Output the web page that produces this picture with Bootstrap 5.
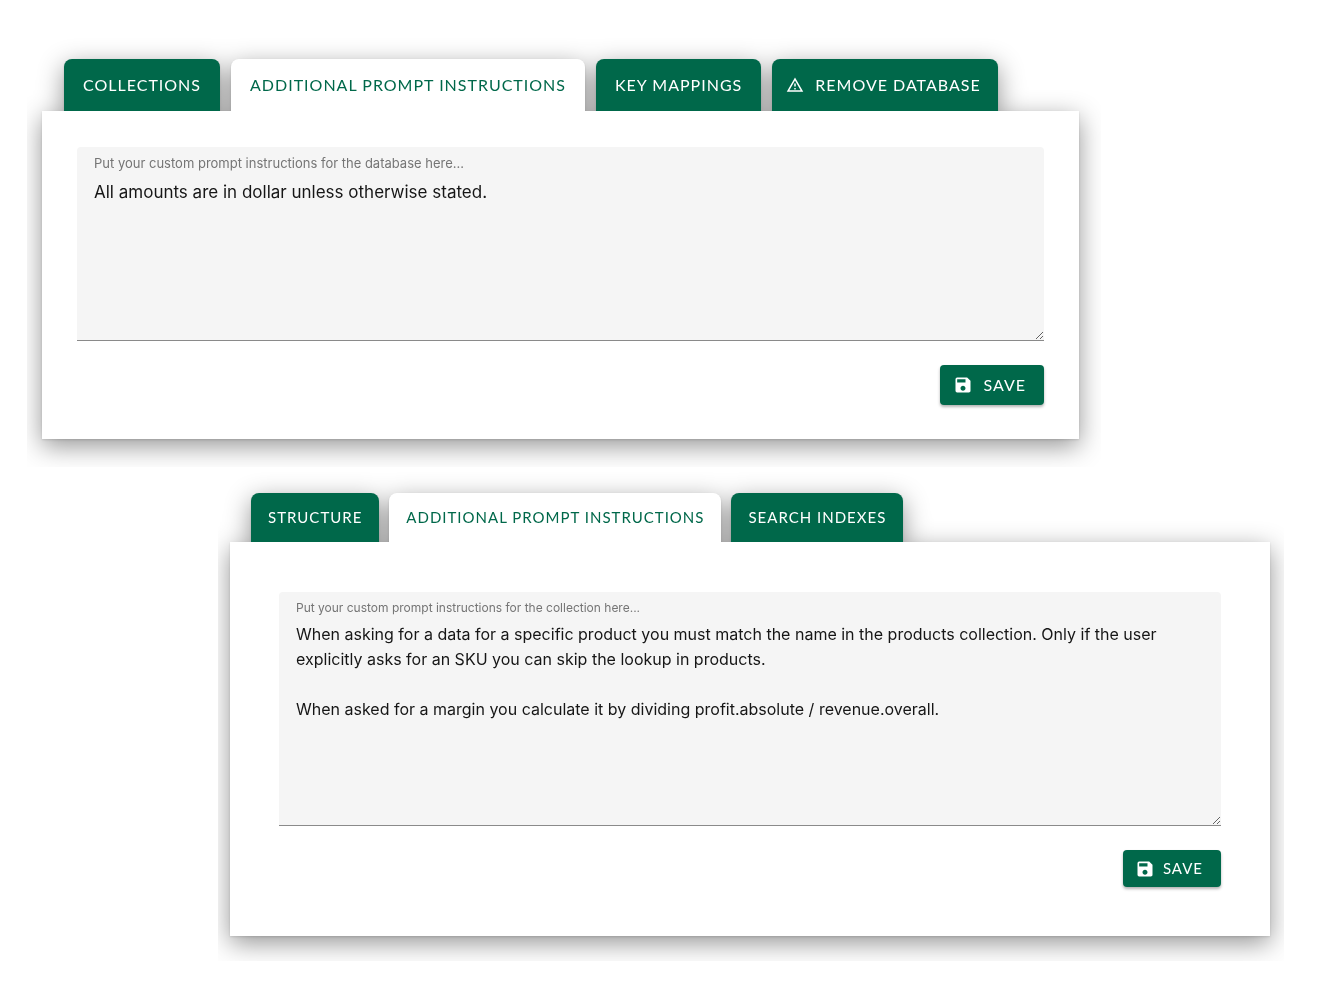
<!DOCTYPE html>
<html lang="en">
<head>
<meta charset="utf-8">
<meta name="viewport" content="width=device-width, initial-scale=1">
<title>Prompt instructions</title>
<link href="https://cdn.jsdelivr.net/npm/bootstrap@5.3.0/dist/css/bootstrap.min.css" rel="stylesheet">
<style>
  :root { --brand: #00684a; }
  body { font-family: Inter, "Liberation Sans", sans-serif; background: #fff; color: #161616; }

  /* Each stage clips the shadow of the sheet inside it */
  .stage-db { margin: 30px 219px 0 27px; padding: 29px 22px 28px 15px; }
  .stage-coll { margin: 0 36px 0 218px; padding: 26px 14px 25px 12px; }
  .sheet { filter: drop-shadow(0 1px 1px rgba(0,0,0,.12)) drop-shadow(0 7px 13px rgba(0,0,0,.42)); }

  .nav-tabs.sheet-tabs { border: 0; gap: 11px; padding-left: 22px; }
  .stage-coll .sheet-tabs { gap: 10px; padding-left: 21px; }
  .sheet-tabs .nav-link {
    border: 0; margin: 0; border-radius: 8px 8px 0 0; padding: 14px 19px;
    font: 16px/24px Lato, sans-serif; letter-spacing: 1px; text-transform: uppercase;
    background: var(--brand); color: #fff;
  }
  .stage-coll .sheet-tabs .nav-link { padding: 12px 17px 13px; font-size: 15px; }
  .sheet-tabs .nav-link.active, .stage-coll .sheet-tabs .nav-link.active { background: #fff; color: var(--brand); }
  .sheet-tabs .nav-link.with-icon { padding-left: 14px; padding-right: 17px; gap: 11px; }

  .sheet-body { background: #fff; padding: 36px 35px 34px; }
  .stage-coll .sheet-body { padding: 50px 49px 49px; }

  .field { background: #f5f5f5; border-radius: 4px 4px 0 0; border-bottom: 1px solid #8a8a8a; padding: 8px 0 0 17px; }
  .field label { font-size: 13px; line-height: 16px; color: #757575; margin-bottom: 8px; }
  .field textarea { border: 0; outline: 0; background: transparent; color: #161616; font-size: 17px; line-height: 26px; padding: 0 16px 5px 0; resize: vertical; }
  .stage-coll .field label { font-size: 12px; margin-bottom: 6px; }
  .stage-coll .field textarea { font-size: 16px; line-height: 25px; padding-bottom: 3px; }

  .btn-save {
    --bs-btn-color: #fff; --bs-btn-bg: var(--brand); --bs-btn-hover-color: #fff; --bs-btn-hover-bg: #00553c;
    --bs-btn-active-bg: #00553c; --bs-btn-active-color: #fff;
    border: 0; border-radius: 4px; padding: 8px 18px 8px 13px; gap: 10px;
    font: 16px/24px Lato, sans-serif; letter-spacing: 1px; text-transform: uppercase;
    box-shadow: 0 2px 3px rgba(0,0,0,.3);
  }
  .stage-coll .btn-save { font-size: 15px; line-height: 21px; padding-left: 12px; gap: 8px; }
</style>
</head>
<body>
<main>
  <section class="stage-db overflow-hidden">
    <div class="sheet">
      <ul class="nav nav-tabs sheet-tabs" role="tablist">
        <li class="nav-item"><button class="nav-link" type="button" role="tab">Collections</button></li>
        <li class="nav-item"><button class="nav-link active" type="button" role="tab" aria-selected="true">Additional prompt instructions</button></li>
        <li class="nav-item"><button class="nav-link" type="button" role="tab">Key mappings</button></li>
        <li class="nav-item"><button class="nav-link with-icon d-flex align-items-center" type="button" role="tab">
          <svg width="18" height="18" viewBox="0 0 24 24" fill="currentColor" aria-hidden="true"><path d="M12 5.99 19.53 19H4.47L12 5.99M12 2 1 21h22L12 2zm1 14h-2v2h2v-2zm0-6h-2v4h2v-4z"/></svg>Remove database</button></li>
      </ul>
      <div class="sheet-body">
        <div class="field">
          <label class="d-block" for="db-prompt">Put your custom prompt instructions for the database here...</label>
          <textarea class="d-block w-100" id="db-prompt" rows="6" spellcheck="false">All amounts are in dollar unless otherwise stated.</textarea>
        </div>
        <div class="d-flex justify-content-end mt-4">
          <button class="btn btn-save d-flex align-items-center" type="button">
            <svg width="20" height="20" viewBox="0 0 24 24" fill="currentColor" aria-hidden="true"><path d="M17 3H5a2 2 0 0 0-2 2v14a2 2 0 0 0 2 2h14c1.100 0 2-.9 2-2V7l-4-4zm-5 16c-1.660 0-3-1.340-3-3s1.340-3 3-3 3 1.340 3 3-1.340 3-3 3zm3-10H5V5h10v4z"/></svg>Save</button>
        </div>
      </div>
    </div>
  </section>

  <section class="stage-coll overflow-hidden">
    <div class="sheet">
      <ul class="nav nav-tabs sheet-tabs" role="tablist">
        <li class="nav-item"><button class="nav-link" type="button" role="tab">Structure</button></li>
        <li class="nav-item"><button class="nav-link active" type="button" role="tab" aria-selected="true">Additional prompt instructions</button></li>
        <li class="nav-item"><button class="nav-link" type="button" role="tab">Search indexes</button></li>
      </ul>
      <div class="sheet-body">
        <div class="field">
          <label class="d-block" for="coll-prompt">Put your custom prompt instructions for the collection here...</label>
          <textarea class="d-block w-100" id="coll-prompt" rows="8" spellcheck="false">When asking for a data for a specific product you must match the name in the products collection. Only if the user explicitly asks for an SKU you can skip the lookup in products.

When asked for a margin you calculate it by dividing profit.absolute / revenue.overall.</textarea>
        </div>
        <div class="d-flex justify-content-end mt-4">
          <button class="btn btn-save d-flex align-items-center" type="button">
            <svg width="20" height="20" viewBox="0 0 24 24" fill="currentColor" aria-hidden="true"><path d="M17 3H5a2 2 0 0 0-2 2v14a2 2 0 0 0 2 2h14c1.100 0 2-.9 2-2V7l-4-4zm-5 16c-1.660 0-3-1.340-3-3s1.340-3 3-3 3 1.340 3 3-1.340 3-3 3zm3-10H5V5h10v4z"/></svg>Save</button>
        </div>
      </div>
    </div>
  </section>
</main>
<script src="https://cdn.jsdelivr.net/npm/bootstrap@5.3.0/dist/js/bootstrap.bundle.min.js"></script>
</body>
</html>
